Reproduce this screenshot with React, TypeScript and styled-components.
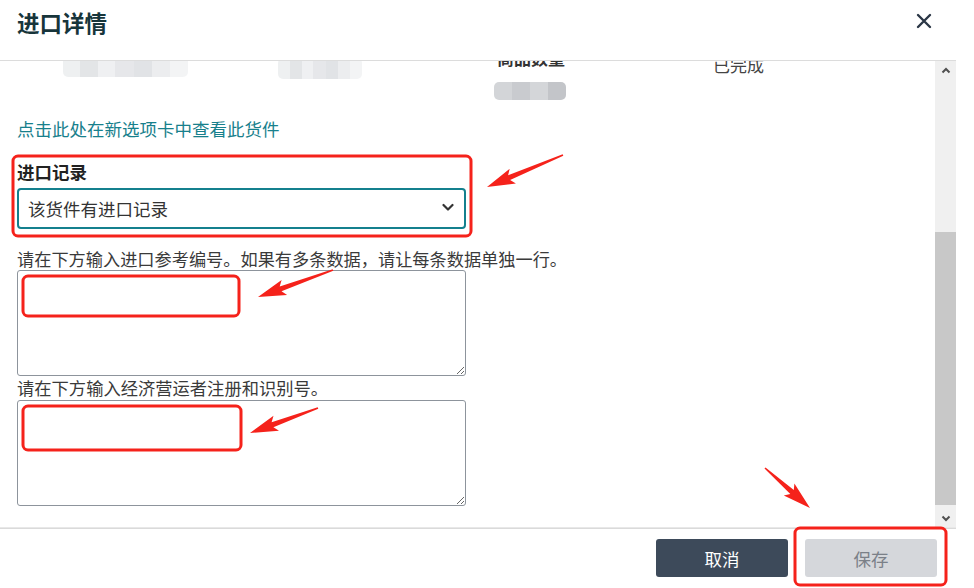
import React from 'react';
import styled, { createGlobalStyle } from 'styled-components';

const GlobalStyle = createGlobalStyle`
  html, body {
    margin: 0;
    padding: 0;
    background: #fff;
  }
  body {
    font-family: "Noto Sans CJK SC", "Noto Sans", sans-serif;
    color: #333;
  }
  * {
    box-sizing: border-box;
  }
`;

const Page = styled.div`
  position: relative;
  width: 974px;
  height: 588px;
  overflow: hidden;
  background: #fff;
`;

const Dialog = styled.div`
  width: 956px;
  height: 588px;
  display: flex;
  flex-direction: column;
`;

const Header = styled.header`
  flex: none;
  height: 61px;
  display: flex;
  align-items: flex-start;
  justify-content: space-between;
  padding: 7px 22px 0 17px;
  border-bottom: 1px solid #dcdcdc;
`;

const Title = styled.h1`
  margin: 0;
  font-size: 22.5px;
  line-height: 30px;
  font-weight: 700;
  color: #17353b;
`;

const CloseButton = styled.button`
  width: 20px;
  height: 20px;
  margin-top: 4px;
  padding: 0;
  border: none;
  background: none;
  display: flex;
  align-items: center;
  justify-content: center;
  cursor: pointer;
`;

const Body = styled.div`
  flex: 1;
  min-height: 0;
  display: flex;
`;

const Content = styled.div`
  flex: 1;
  overflow: hidden;
  padding-left: 17px;
`;

const SummaryRow = styled.div`
  margin-top: -15px;
  padding-left: 46px;
  display: grid;
  grid-template-columns: 215px 219px 216px auto;
  align-items: start;
`;

const Cell = styled.div<{ $mt?: number }>`
  display: flex;
  flex-direction: column;
  margin-top: ${(p) => p.$mt ?? 0}px;
`;

const Redacted = styled.div<{ $w: number; $h: number; $mt?: number; $ml?: number; $dark?: boolean }>`
  width: ${(p) => p.$w}px;
  height: ${(p) => p.$h}px;
  margin-top: ${(p) => p.$mt ?? 0}px;
  margin-left: ${(p) => p.$ml ?? 0}px;
  border-radius: 5px;
  background: ${(p) =>
    p.$dark
      ? 'linear-gradient(90deg, #d3d5d8 0 25%, #c9cbcf 25% 50%, #d4d6d9 50% 75%, #c3c5c9 75% 100%)'
      : 'linear-gradient(90deg, #eef0f1 0 14%, #e3e5e7 14% 28%, #eff0f2 28% 42%, #e6e7ea 42% 57%, #e1e3e6 57% 71%, #ecedef 71% 86%, #f3f4f5 86% 100%)'};
  filter: blur(0.6px);
`;

const FieldName = styled.div`
  font-size: 17px;
  line-height: 24px;
  font-weight: 700;
  color: #333;
  white-space: nowrap;
`;

const StatusText = styled.div`
  font-size: 17px;
  line-height: 24px;
  color: #444;
`;

const ShipmentLink = styled.a`
  display: block;
  margin-top: 17px;
  font-size: 17.5px;
  line-height: 24px;
  color: #17808c;
  text-decoration: none;
`;

const FieldGroup = styled.div`
  margin-top: 19px;
  width: 449px;
`;

const GroupLabel = styled.label`
  display: block;
  font-size: 17.5px;
  line-height: 24px;
  font-weight: 700;
  color: #222;
`;

const SelectWrap = styled.div`
  position: relative;
  margin-top: 4px;
  height: 41px;
`;

const Select = styled.select`
  appearance: none;
  width: 100%;
  height: 100%;
  padding: 0 36px 0 9px;
  border: 2px solid #14808e;
  border-radius: 4px;
  background: #fff;
  font-family: inherit;
  font-size: 17.5px;
  color: #333;
  outline: none;
`;

const SelectChevron = styled.svg`
  position: absolute;
  right: 12px;
  top: 15px;
  pointer-events: none;
`;

const Prompt = styled.label<{ $mt: number; $lh: number; $size: number }>`
  display: block;
  margin-top: ${(p) => p.$mt}px;
  font-size: ${(p) => p.$size}px;
  line-height: ${(p) => p.$lh}px;
  color: #3a3a3a;
  white-space: nowrap;
`;

const TextArea = styled.textarea`
  display: block;
  width: 449px;
  height: 106px;
  margin: 0;
  padding: 6px 8px;
  border: 1px solid #8d949c;
  border-radius: 3px;
  font-family: inherit;
  font-size: 16px;
  resize: both;
  outline: none;
`;

const ScrollBar = styled.div`
  flex: none;
  width: 21px;
  display: flex;
  flex-direction: column;
  background: #f0f0f0;
`;

const ScrollButton = styled.div`
  flex: none;
  height: 18px;
  display: flex;
  align-items: center;
  justify-content: center;
`;

const ScrollTrack = styled.div`
  flex: 1;
  display: flex;
  flex-direction: column;
`;

const ScrollThumb = styled.div<{ $offset: number; $size: number }>`
  margin-top: ${(p) => p.$offset}px;
  height: ${(p) => p.$size}px;
  background: #c8c8c8;
`;

const Footer = styled.footer`
  flex: none;
  height: 61px;
  display: flex;
  justify-content: flex-end;
  gap: 17px;
  padding: 11px 19px 0 0;
  border-top: 1px solid #e8e8e8;
  box-shadow: inset 0 1px 0 #dadada;
`;

const Button = styled.button<{ $variant: 'primary' | 'disabled' }>`
  width: 132px;
  height: 38px;
  border: none;
  border-radius: 3px;
  font-family: inherit;
  font-size: 17.5px;
  background: ${(p) => (p.$variant === 'primary' ? '#3d4a5a' : '#d5d7db')};
  color: ${(p) => (p.$variant === 'primary' ? '#fff' : '#7b8088')};
  cursor: ${(p) => (p.$variant === 'primary' ? 'pointer' : 'default')};
`;

const Annotations = styled.svg`
  position: absolute;
  left: 0;
  top: 0;
  pointer-events: none;
`;

// tapered red arrow, tail -> tip
function arrowPoints(tx: number, ty: number, hx: number, hy: number) {
  const len = Math.hypot(hx - tx, hy - ty);
  const dx = (hx - tx) / len;
  const dy = (hy - ty) / len;
  const nx = -dy;
  const ny = dx;
  const head = 24;
  const bx = hx - dx * head;
  const by = hy - dy * head;
  const wx = hx - dx * (head + 4);
  const wy = hy - dy * (head + 4);
  const pts = [
    [tx + nx * 0.8, ty + ny * 0.8],
    [bx + nx * 2.6, by + ny * 2.6],
    [wx + nx * 8, wy + ny * 8],
    [hx, hy],
    [wx - nx * 8, wy - ny * 8],
    [bx - nx * 2.6, by - ny * 2.6],
    [tx - nx * 0.8, ty - ny * 0.8],
  ];
  return pts.map(([x, y]) => `${x.toFixed(1)},${y.toFixed(1)}`).join(' ');
}

const boxes = [
  { x: 13, y: 156, w: 458, h: 80 },
  { x: 23, y: 276, w: 216, h: 40 },
  { x: 23, y: 406, w: 218, h: 44 },
  { x: 795, y: 528, w: 151, h: 57 },
];

const arrows = [
  [563, 155, 487, 187],
  [333, 270, 258, 297],
  [318, 408, 250, 433],
  [765, 468, 810, 508],
];

const App: React.FC = () => {
  return (
    <Page>
      <GlobalStyle />
      <Dialog>
        <Header>
          <Title>进口详情</Title>
          <CloseButton aria-label="关闭">
            <svg width="16" height="16" viewBox="0 0 16 16">
              <path d="M2 2L14 14M14 2L2 14" stroke="#2b3746" strokeWidth="2.4" strokeLinecap="round" />
            </svg>
          </CloseButton>
        </Header>

        <Body>
          <Content>
            <SummaryRow>
              <Cell $mt={10}>
                <Redacted $w={125} $h={21} />
              </Cell>
              <Cell $mt={12}>
                <Redacted $w={84} $h={21} />
              </Cell>
              <Cell>
                <FieldName>商品数量</FieldName>
                <Redacted $w={72} $h={18} $mt={12} $ml={-3} $dark />
              </Cell>
              <Cell $mt={7}>
                <StatusText>已完成</StatusText>
              </Cell>
            </SummaryRow>

            <ShipmentLink href="#">点击此处在新选项卡中查看此货件</ShipmentLink>

            <FieldGroup>
              <GroupLabel>进口记录</GroupLabel>
              <SelectWrap>
                <Select defaultValue="yes">
                  <option value="yes">该货件有进口记录</option>
                  <option value="no">该货件无进口记录</option>
                </Select>
                <SelectChevron width="12" height="9" viewBox="0 0 12 9">
                  <path d="M1.5 2L6 6.5L10.5 2" fill="none" stroke="#333" strokeWidth="2.2" strokeLinecap="round" strokeLinejoin="round" />
                </SelectChevron>
              </SelectWrap>
            </FieldGroup>

            <Prompt $mt={18} $lh={23} $size={17.2}>
              请在下方输入进口参考编号。如果有多条数据，请让每条数据单独一行。
            </Prompt>
            <TextArea />
            <Prompt $mt={0} $lh={24} $size={17.3}>
              请在下方输入经济营运者注册和识别号。
            </Prompt>
            <TextArea />
          </Content>

          <ScrollBar>
            <ScrollButton>
              <svg width="10" height="7" viewBox="0 0 10 7">
                <path d="M1.5 5.5L5 2L8.5 5.5" fill="none" stroke="#505050" strokeWidth="2" />
              </svg>
            </ScrollButton>
            <ScrollTrack>
              <ScrollThumb $offset={153} $size={273} />
            </ScrollTrack>
            <ScrollButton>
              <svg width="10" height="7" viewBox="0 0 10 7">
                <path d="M1.5 1.5L5 5L8.5 1.5" fill="none" stroke="#505050" strokeWidth="2" />
              </svg>
            </ScrollButton>
          </ScrollBar>
        </Body>

        <Footer>
          <Button $variant="primary">取消</Button>
          <Button $variant="disabled" disabled>
            保存
          </Button>
        </Footer>
      </Dialog>

      <Annotations width="974" height="588" viewBox="0 0 974 588">
        {boxes.map((b, i) => (
          <rect key={i} x={b.x} y={b.y} width={b.w} height={b.h} rx="5" fill="none" stroke="#f5221b" strokeWidth="3" />
        ))}
        {arrows.map(([tx, ty, hx, hy], i) => (
          <polygon key={i} points={arrowPoints(tx, ty, hx, hy)} fill="#f5221b" />
        ))}
      </Annotations>
    </Page>
  );
};

export default App;
